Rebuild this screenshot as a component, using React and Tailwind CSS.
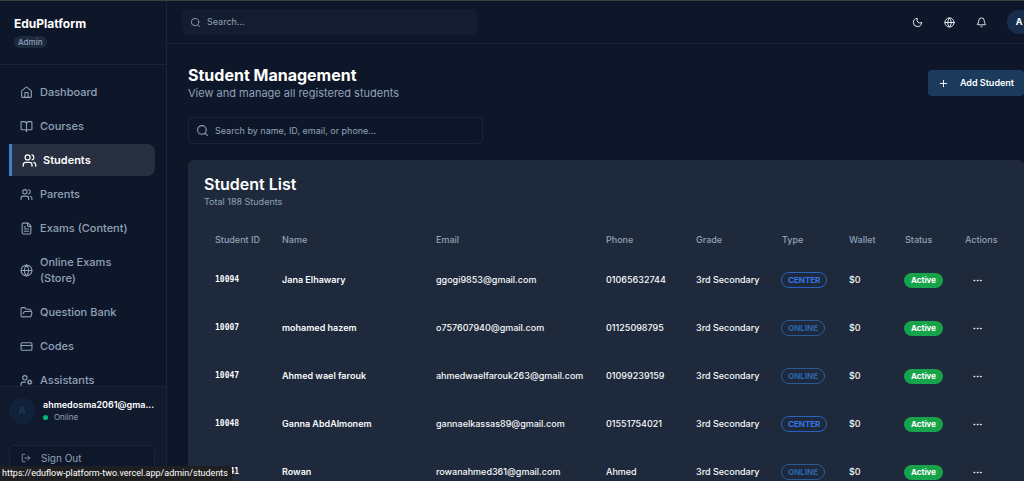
import {
  Bell,
  BookOpen,
  CreditCard,
  Ellipsis,
  FileText,
  FolderOpen,
  Globe,
  House,
  LogOut,
  Moon,
  Plus,
  Search,
  UserCog,
  Users,
} from "lucide-react";

const navItems = [
  { label: "Dashboard", icon: House },
  { label: "Courses", icon: BookOpen },
  { label: "Students", icon: Users, active: true },
  { label: "Parents", icon: Users },
  { label: "Exams (Content)", icon: FileText },
  { label: "Online Exams (Store)", icon: Globe },
  { label: "Question Bank", icon: FolderOpen },
  { label: "Codes", icon: CreditCard },
  { label: "Assistants", icon: UserCog },
];

const students = [
  { id: "10094", name: "Jana Elhawary", email: "ggogi9853@gmail.com", phone: "01065632744", type: "CENTER" },
  { id: "10007", name: "mohamed hazem", email: "o757607940@gmail.com", phone: "01125098795", type: "ONLINE" },
  { id: "10047", name: "Ahmed wael farouk", email: "ahmedwaelfarouk263@gmail.com", phone: "01099239159", type: "ONLINE" },
  { id: "10048", name: "Ganna AbdAlmonem", email: "gannaelkassas89@gmail.com", phone: "01551754021", type: "CENTER" },
  { id: "10041", name: "Rowan", email: "rowanahmed361@gmail.com", phone: "Ahmed", type: "ONLINE" },
];

const columns = [
  { label: "Student ID", width: "w-[67px]" },
  { label: "Name", width: "w-[154px]" },
  { label: "Email", width: "w-[170px]" },
  { label: "Phone", width: "w-[90px]" },
  { label: "Grade", width: "w-[86px]" },
  { label: "Type", width: "w-[67px]" },
  { label: "Wallet", width: "w-[56px]" },
  { label: "Status", width: "w-[60px]" },
  { label: "Actions", width: "w-auto" },
];

const Sidebar = () => (
  <aside className="flex w-[167px] shrink-0 flex-col border-r border-[#1b2539]">
    <div className="flex h-16 shrink-0 flex-col items-start border-b border-[#1b2539] px-3.5 pt-[15px]">
      <span className="text-[12px] leading-4 font-bold text-white">EduPlatform</span>
      <span className="mt-1 rounded-full bg-slate-800 px-1 text-[8px] leading-3 font-medium text-slate-400">Admin</span>
    </div>

    <nav className="flex min-h-0 flex-1 flex-col gap-0.5 overflow-hidden pt-[11px] pr-[11px] pl-[9px]">
      {navItems.map(({ label, icon: Icon, active }) => (
        <a
          key={label}
          href="#"
          className={
            active
              ? "flex shrink-0 items-center gap-1.5 rounded-r-lg border-l-[3px] border-[#3b82c4] bg-[#282f40] py-2 pr-2 pl-2.5 text-[11px] leading-4 font-semibold text-white"
              : "flex shrink-0 items-center gap-[7px] py-2 pr-6 pl-[11px] text-[11px] leading-4 font-medium text-slate-400"
          }
        >
          <Icon className={active ? "size-[15px] shrink-0" : "size-[13px] shrink-0"} />
          {label}
        </a>
      ))}
    </nav>

    <div className="h-[95px] shrink-0 border-t border-[#1b2539] bg-[#111a2d] pt-[11px] pr-[11px] pl-[9px]">
      <div className="flex items-center gap-2">
        <div className="flex size-[26px] shrink-0 items-center justify-center rounded-full border border-[#16233c] bg-[#12213a] text-[9px] font-bold text-[#1e3a5f]">
          A
        </div>
        <div className="min-w-0">
          <p className="text-[9px] leading-3 font-semibold text-white">ahmedosma2061@gma...</p>
          <p className="flex items-center gap-1.5 text-[8px] leading-3 text-slate-400">
            <span className="size-[5px] rounded-full bg-emerald-500" />
            Online
          </p>
        </div>
      </div>
      <button className="mt-[21px] flex h-[26px] w-full items-center gap-2.5 rounded border border-[#1b2539] bg-[#0f172a] px-[11px] text-[10px] text-slate-400">
        <LogOut className="size-2.5" />
        Sign Out
      </button>
    </div>
  </aside>
);

const Header = () => (
  <header className="flex h-[43px] shrink-0 items-center justify-between border-b border-[#1b2539] pr-3.5 pl-[15px]">
    <label className="flex h-[26px] w-[296px] items-center gap-1.5 rounded-md bg-[#141d30] px-2">
      <Search className="size-[11px] text-slate-400" />
      <input
        type="search"
        aria-label="Search"
        placeholder="Search..."
        className="min-w-0 flex-1 bg-transparent text-[9px] outline-none placeholder:text-slate-400"
      />
    </label>
    <div className="flex items-center gap-[5px] text-slate-100">
      <button aria-label="Toggle theme" className="flex size-[27px] items-center justify-center">
        <Moon className="size-[11px]" />
      </button>
      <button aria-label="Language" className="flex size-[27px] items-center justify-center">
        <Globe className="size-[11px]" />
      </button>
      <button aria-label="Notifications" className="flex size-[27px] items-center justify-center">
        <Bell className="size-[11px]" />
      </button>
      <button className="ml-[7px] flex size-6 items-center justify-center rounded-full bg-[#182c4b] text-[9px] font-bold text-white">
        A
      </button>
    </div>
  </header>
);

const StudentTable = () => (
  <table className="mt-3.5 w-full table-fixed text-left text-[9px] leading-[14px]">
    <thead>
      <tr className="h-8 text-slate-400">
        {columns.map((col) => (
          <th key={col.label} className={`${col.width} pl-[11px] font-medium`}>
            {col.label}
          </th>
        ))}
      </tr>
    </thead>
    <tbody>
      {students.map((s) => (
        <tr key={s.id} className="h-12 font-medium whitespace-nowrap text-slate-50">
          <td className="pl-[11px] font-['DejaVu_Sans_Mono',monospace] text-[8px] font-bold">{s.id}</td>
          <td className="pl-[11px] font-semibold">{s.name}</td>
          <td className="pl-[11px]">{s.email}</td>
          <td className="pl-[11px]">{s.phone}</td>
          <td className="pl-[11px]">3rd Secondary</td>
          <td className="pl-2.5">
            <span
              className={
                s.type === "CENTER"
                  ? "inline-block rounded-full border border-[#2b62c0] px-1.5 text-[8px] leading-[14px] font-bold text-[#3577e8]"
                  : "inline-block rounded-full border border-[#2c5a94] px-1.5 text-[8px] leading-[14px] font-bold text-[#2f66ad]"
              }
            >
              {s.type}
            </span>
          </td>
          <td className="pl-[11px]">$0</td>
          <td className="pl-2.5">
            <span className="inline-block rounded-full bg-[#17a34a] px-[7px] text-[8px] leading-[15px] font-bold text-white">
              Active
            </span>
          </td>
          <td className="pl-[11px]">
            <button aria-label={`Actions for ${s.name}`} className="flex size-6 items-center justify-center">
              <Ellipsis className="size-[11px]" />
            </button>
          </td>
        </tr>
      ))}
    </tbody>
  </table>
);

const App = () => {
  return (
    <div className="h-screen overflow-hidden border-t border-neutral-700 bg-[#0e1729] font-[Inter,sans-serif]">
      <div className="flex h-full w-[calc(100%+21px)]">
        <Sidebar />
        <div className="flex min-w-0 flex-1 flex-col">
          <Header />
          <main className="min-h-0 flex-1 overflow-hidden px-[21px] pt-[21px]">
            <div className="flex items-center justify-between">
              <div>
                <h1 className="text-[16px] leading-5 font-bold text-white">Student Management</h1>
                <p className="text-[11px] leading-4 text-slate-400">View and manage all registered students</p>
              </div>
              <button className="flex h-[26px] items-center gap-[11px] rounded bg-[#1b3a5c] px-2.5 text-[9px] font-semibold text-white">
                <Plus className="size-[11px]" />
                Add Student
              </button>
            </div>

            <label className="mt-4 flex h-[27px] w-[295px] items-center gap-1.5 rounded border border-[#1b2539] px-[7px]">
              <Search className="size-[13px] text-slate-400" />
              <input
                type="search"
                aria-label="Search students"
                placeholder="Search by name, ID, email, or phone..."
                className="min-w-0 flex-1 bg-transparent text-[9px] outline-none placeholder:text-slate-400"
              />
            </label>

            <section className="mt-4 rounded-md bg-[#1e293b] px-4 pt-3.5">
              <h2 className="text-[16px] leading-5 font-semibold text-white">Student List</h2>
              <p className="text-[9px] leading-4 text-slate-400">Total 188 Students</p>
              <StudentTable />
            </section>
          </main>
        </div>
      </div>

      <div className="fixed bottom-0 left-0 rounded-tr bg-[#1f1f21] px-[2px] pr-1 font-[Roboto,sans-serif] text-[9px] leading-[15px] text-white">
        https://eduflow-platform-two.vercel.app/admin/students
      </div>
    </div>
  );
};

export default App;
